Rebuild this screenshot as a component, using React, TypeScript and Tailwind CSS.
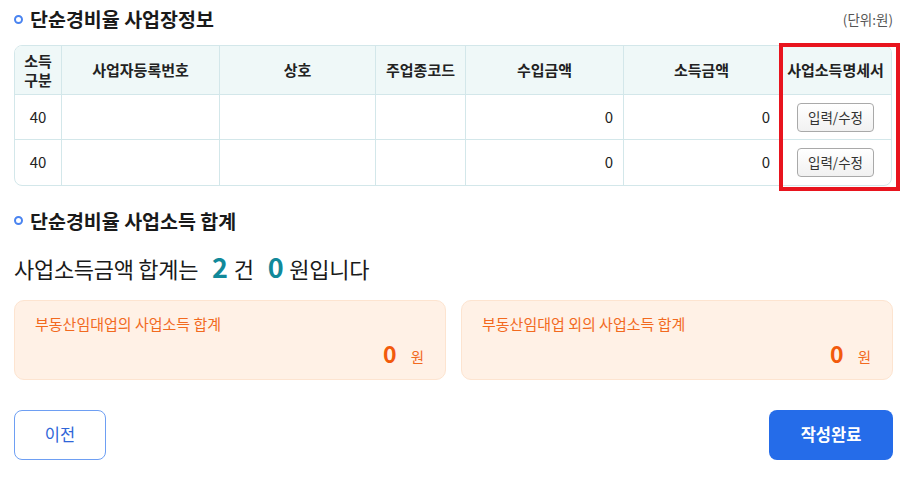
import React from "react";

const rows = [
  { type: "40", biz: "", name: "", code: "", revenue: "0", income: "0" },
  { type: "40", biz: "", name: "", code: "", revenue: "0", income: "0" },
];

const SectionTitle: React.FC<{ children: React.ReactNode }> = ({ children }) => (
  <div className="flex items-center gap-[7px]">
    <span className="w-[9px] h-[9px] rounded-full border-2 border-[#4a84f0]" />
    <h2 className="text-[19.5px] font-bold text-[#1a1a1a]">{children}</h2>
  </div>
);

const SumCard: React.FC<{ title: string }> = ({ title }) => (
  <div className="flex-1 h-[80px] rounded-[10px] bg-[#fff1e6] border border-[#fde4d0] pl-[20px] pr-[20px] pt-[13px]">
    <p className="text-[15px] text-[#f26a1f] leading-[20px]">{title}</p>
    <div className="flex items-baseline justify-end gap-[14px] mt-[2px]">
      <span className="text-[23px] font-bold text-[#f25a0c]">0</span>
      <span className="text-[14.5px] text-[#f26a1f] pr-[1px]">원</span>
    </div>
  </div>
);

const App: React.FC = () => {
  const cell = "flex items-center border-r border-[#d3e7ea] text-[15px] text-[#222]";

  return (
    <div
      className="w-[917px] h-[484px] bg-white px-[14px] pt-[6px]"
      style={{ fontFamily: '"Noto Sans CJK KR", "Noto Sans", sans-serif' }}
    >
      {/* 사업장정보 */}
      <div className="flex items-center justify-between h-[26px] w-[879px]">
        <SectionTitle>단순경비율 사업장정보</SectionTitle>
        <span className="text-[13.5px] text-[#555]">(단위:원)</span>
      </div>

      <div className="relative mt-[13px]">
        <div className="w-[878px] rounded-[8px] border border-[#d3e7ea] overflow-hidden">
          <div className="grid grid-cols-[47px_158px_156px_90px_158px_156px_1fr] h-[49px] bg-[#eff8f8] border-b border-[#d3e7ea] font-bold text-[15px] text-[#222]">
            <div className="flex flex-col items-center justify-center border-r border-[#d3e7ea] leading-[19px]">
              <span>소득</span>
              <span>구분</span>
            </div>
            <div className="flex items-center justify-center border-r border-[#d3e7ea]">사업자등록번호</div>
            <div className="flex items-center justify-center border-r border-[#d3e7ea]">상호</div>
            <div className="flex items-center justify-center border-r border-[#d3e7ea]">주업종코드</div>
            <div className="flex items-center justify-center border-r border-[#d3e7ea]">수입금액</div>
            <div className="flex items-center justify-center border-r border-[#d3e7ea]">소득금액</div>
            <div className="flex items-center justify-center">사업소득명세서</div>
          </div>
          {rows.map((r, i) => (
            <div
              key={i}
              className={`grid grid-cols-[47px_158px_156px_90px_158px_156px_1fr] h-[45px] ${
                i < rows.length - 1 ? "border-b border-[#d3e7ea]" : ""
              }`}
            >
              <div className={`${cell} justify-center`}>{r.type}</div>
              <div className={cell}>{r.biz}</div>
              <div className={cell}>{r.name}</div>
              <div className={cell}>{r.code}</div>
              <div className={`${cell} justify-end pr-[10px]`}>{r.revenue}</div>
              <div className={`${cell} justify-end pr-[9px]`}>{r.income}</div>
              <div className="flex items-center justify-center">
                <button className="h-[29px] w-[77px] rounded-[4px] border border-[#a9a9a9] bg-gradient-to-b from-white to-[#f1f1f1] text-[13.5px] text-[#333]">
                  입력/수정
                </button>
              </div>
            </div>
          ))}
        </div>
        {/* 강조 표시 */}
        <div className="absolute left-[765px] top-[-2px] w-[121px] h-[148px] border-[4px] border-[#e8141e] pointer-events-none" />
      </div>

      {/* 사업소득 합계 */}
      <div className="mt-[20px]">
        <SectionTitle>단순경비율 사업소득 합계</SectionTitle>
      </div>

      <div className="flex items-baseline mt-[12px] text-[22px] text-[#1a1a1a] tracking-[-0.3px]">
        <span>사업소득금액 합계는</span>
        <span className="ml-[14px] text-[27px] font-bold text-[#11899a]">2</span>
        <span className="ml-[6px]">건</span>
        <span className="ml-[14px] text-[27px] font-bold text-[#11899a]">0</span>
        <span className="ml-[6px]">원입니다</span>
      </div>

      <div className="flex gap-[15px] mt-[12px] w-[879px]">
        <SumCard title="부동산임대업의 사업소득 합계" />
        <SumCard title="부동산임대업 외의 사업소득 합계" />
      </div>

      <div className="flex justify-between mt-[30px] w-[879px]">
        <button className="w-[92px] h-[50px] rounded-[8px] border border-[#6e9ff3] bg-white text-[16.5px] text-[#2f66d8]">
          이전
        </button>
        <button className="w-[124px] h-[50px] rounded-[8px] bg-[#256ce9] text-[16.5px] font-bold text-white">
          작성완료
        </button>
      </div>
    </div>
  );
};

export default App;
